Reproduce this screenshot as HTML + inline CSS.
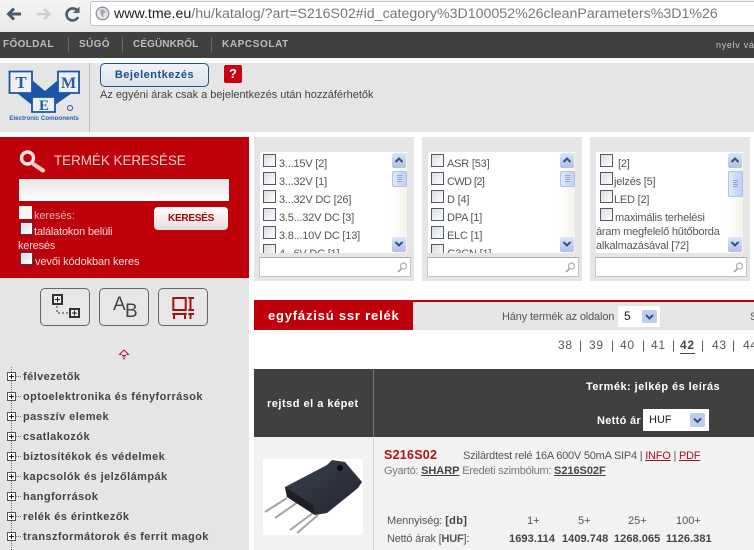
<!DOCTYPE html>
<html><head><meta charset="utf-8"><title>TME</title>
<style>
html,body{margin:0;padding:0;background:#fff}
body{width:754px;height:550px;position:relative;overflow:hidden;font-family:"Liberation Sans",sans-serif;font-size:11px;color:#444}
.a,.t{position:absolute}
.t{white-space:nowrap;line-height:14px}
.b{font-weight:bold}
.nav{color:#bcbcbc;font-weight:bold;font-size:10px;letter-spacing:.35px;top:38px}
.sep{position:absolute;top:37px;width:1px;height:15px;background:#6a6a6a}
.fbox{position:absolute;top:137px;width:160px;height:144px;background:#e5e5e5}
.list{position:absolute;left:6px;top:15px;width:147px;height:101px;background:#fff;overflow:hidden}
.sb{position:absolute;right:0;top:0;width:16px;height:101px;background:linear-gradient(90deg,#fff,#f3f3ea)}
.sbb{position:absolute;left:1px;width:14px;height:15px;background:linear-gradient(#dce6fa,#aebfe8);border-radius:2px}
.sbt{position:absolute;left:1px;top:19px;width:13px;height:14px;background:linear-gradient(90deg,#dfe8fb,#c0cff2);border:1px solid #b3c3e8;border-radius:2px}
.sbt:after{content:"";position:absolute;left:4px;top:50%;margin-top:-4px;width:5px;height:8px;background:repeating-linear-gradient(#8fa6d6 0 1px,transparent 1px 2px)}
.srch{position:absolute;left:5px;top:120px;width:150px;height:18px;background:#fff;border:1px solid #c4c4c4;border-top-color:#aaa}
.cb{position:absolute;width:11px;height:11px;border:1px solid #4e5a70;background:linear-gradient(135deg,#dcdcdc,#fff)}
.li{position:absolute;left:19px;margin-top:1px;color:#555;font-size:11px;letter-spacing:-.2px;white-space:nowrap;line-height:14px}
.tree{position:absolute;left:23px;margin-top:1px;font-weight:bold;color:#444;font-size:11px;letter-spacing:.42px;white-space:nowrap;line-height:14px}
.pl{position:absolute;left:7px;width:9px;height:9px;border:1px solid #555;background:#fff;box-sizing:border-box}
.pl:before{content:"";position:absolute;left:1px;top:3px;width:5px;height:1px;background:#222}
.pl:after{content:"";position:absolute;left:3px;top:1px;width:1px;height:5px;background:#222}
.dot{position:absolute;left:16px;width:5px;border-top:1px dotted #777}
.ib{position:absolute;top:288px;width:48px;height:36px;border:1px solid #666;border-radius:5px;background:#e7e7e7}
.pg{position:absolute;top:338px;font-size:12px;color:#555;letter-spacing:.7px}
</style></head>
<body>
<!-- browser toolbar -->
<div class="a" style="left:0;top:0;width:754px;height:32px;background:linear-gradient(#f4f4f4,#e9e9e9)"></div>
<svg class="a" style="left:0;top:0" width="90" height="30">
<path d="M21 14H9M14 8.500L8.500 14L14 19.500" fill="none" stroke="#4d5a6b" stroke-width="3"/>
<path d="M37 14H49M44 9L49.500 14L44 19" fill="none" stroke="#ccd0d6" stroke-width="2.600"/>
<path d="M77.500 11A6 6 0 1 0 78 17" fill="none" stroke="#4d5a6b" stroke-width="2.600"/><path d="M79.500 6.500V13H73Z" fill="#4d5a6b"/>
</svg>
<div class="a" style="left:90px;top:1px;width:664px;height:25px;background:#fff;border:1px solid #c2c2c2;border-right:0;border-radius:3px 0 0 3px;box-sizing:border-box"></div>
<svg class="a" style="left:95px;top:6px" width="15" height="15"><circle cx="7.500" cy="7.500" r="6.300" fill="#e4e8eb" stroke="#8d9196" stroke-width="1.300"/><path d="M5 4l3-1 3 3-3 2 1 4-3-3z" fill="#a4a8ad"/></svg>
<div class="t" style="left:114px;top:6px;font-size:14.200px;line-height:16px;color:#777"><span style="color:#222">www.tme.eu</span>/hu/katalog/?art=S216S02#id_category%3D100052%26cleanParameters%3D1%26</div>
<!-- nav -->
<div class="a" style="left:0;top:32px;width:754px;height:26px;background:#404040"></div>
<div class="t nav" style="left:3px">FŐOLDAL</div><div class="sep" style="left:68px"></div>
<div class="t nav" style="left:79px">SÚGÓ</div><div class="sep" style="left:122px"></div>
<div class="t nav" style="left:133px;letter-spacing:.1px">CÉGÜNKRŐL</div><div class="sep" style="left:211px"></div>
<div class="t nav" style="left:222px;letter-spacing:.6px">KAPCSOLAT</div>
<div class="t" style="left:716px;top:38px;color:#c4c4c4;font-size:9px;letter-spacing:.7px">nyelv vá</div>
<!-- top panel -->
<div class="a" style="left:0;top:63px;width:754px;height:69px;background:#e5e5e5"></div>
<div class="a" style="left:89px;top:63px;width:1px;height:69px;background:#bdbdbd"></div>
<svg class="a" style="left:8px;top:70px" width="74" height="50">
<path d="M1.500 1.500H24V23H1.500ZM50 1.500H71V23H50ZM24 27H47V42H24Z" fill="#eef0f4" stroke="#1a55a6" stroke-width="1.800"/>
<path d="M24 10L37 21L50 10V23H64L47 35V27H24V35L9 23H24Z" fill="#1a55a6"/>
<text x="13" y="18" font-family="Liberation Serif,serif" font-weight="bold" font-size="17" fill="#1f5aa8" text-anchor="middle">T</text>
<text x="60.500" y="18" font-family="Liberation Serif,serif" font-weight="bold" font-size="16" fill="#1f5aa8" text-anchor="middle">M</text>
<text x="36" y="40" font-family="Liberation Serif,serif" font-weight="bold" font-size="15" fill="#1f5aa8" text-anchor="middle">E</text>
<circle cx="62" cy="38" r="2.500" fill="none" stroke="#1a55a6" stroke-width="1"/>
<text x="36" y="50" font-weight="bold" font-size="6.200" fill="#2a63ad" text-anchor="middle" font-family="Liberation Sans,sans-serif">Electronic Components</text>
</svg>
<div class="a" style="left:100px;top:63px;width:109px;height:24px;box-sizing:border-box;border:1px solid #1d5390;border-radius:5px;background:linear-gradient(#f0f2f7,#dce3ee);color:#1d4f8c;font-weight:bold;font-size:11px;letter-spacing:.5px;text-align:center;line-height:22px">Bejelentkezés</div>
<div class="a" style="left:224px;top:65px;width:18px;height:18px;background:#c8000f;border-radius:2px;color:#fff;font-weight:bold;font-size:13px;text-align:center;line-height:18px">?</div>
<div class="t" style="left:100px;top:88px;color:#444;font-size:11px;letter-spacing:-.02px">Az egyéni árak csak a bejelentkezés után hozzáférhetők</div>
<!-- search box -->
<div class="a" style="left:0;top:137px;width:249px;height:141px;background:#bd0009"></div>
<svg class="a" style="left:18px;top:145px" width="30" height="30"><circle cx="9.500" cy="13" r="6" fill="#bd0009" stroke="#f7e3de" stroke-width="3.400"/><path d="M16 19.500L25 25.500" stroke="#eec9bf" stroke-width="4.200" stroke-linecap="round"/></svg>
<div class="t" style="left:54px;top:153px;color:#f2cfcf;font-size:13.400px;line-height:16px">TERMÉK KERESÉSE</div>
<div class="a" style="left:19px;top:179px;width:210px;height:22px;background:linear-gradient(#e6e6e6,#fff)"></div>
<div class="a" style="left:19px;top:206px;width:13px;height:13px;background:#f6f6f6"></div>
<div class="t" style="left:34px;top:209px;color:#e7b0b0;letter-spacing:-.1px">keresés:</div>
<div class="a" style="left:154px;top:207px;width:74px;height:23px;border-radius:4px;background:linear-gradient(#fff,#e4dcdc);color:#a80008;font-weight:bold;font-size:10px;text-align:center;line-height:23px;letter-spacing:-.25px">KERESÉS</div>
<div class="a" style="left:20px;top:222px;width:11px;height:11px;border:1px solid #3d3d60;background:linear-gradient(135deg,#d8d8e0,#fff)"></div>
<div class="t" style="left:34px;top:225px;color:#f0dcdc;letter-spacing:-.2px">találatokon belüli</div>
<div class="t" style="left:18px;top:239px;color:#f0dcdc;letter-spacing:-.2px">keresés</div>
<div class="a" style="left:20px;top:252px;width:11px;height:11px;border:1px solid #3d3d60;background:linear-gradient(135deg,#d8d8e0,#fff)"></div>
<div class="t" style="left:35px;top:255px;color:#f0dcdc;letter-spacing:-.1px">vevői kódokban keres</div>
<!-- sidebar -->
<div class="a" style="left:0;top:278px;width:249px;height:272px;background:#e5e5e5"></div>
<div class="ib" style="left:40px"><svg width="48" height="36"><path d="M12 6H21V15H12ZM29 20H38V28H29Z" fill="#eee" stroke="#333" stroke-width="2"/><path d="M14 10.500H19M16.500 8V13M31 24H36M33.500 21.500V26.500" stroke="#222"/><path d="M16 17V24H27" fill="none" stroke="#333" stroke-dasharray="2 2"/></svg></div>
<div class="ib" style="left:99px"><div class="t" style="left:13px;top:6px;font-size:19px;line-height:19px;color:#444">A</div><div class="t" style="left:25px;top:13px;font-size:19px;line-height:19px;color:#444">B</div></div>
<div class="ib" style="left:158px"><svg width="48" height="36"><path d="M14.300 9H26.700V21H14.300ZM29.300 9H35M31.500 9V21M29.300 21H35M13.300 25H27.700M15 25V30M26 25V30M29.300 25H35M31.500 25V30" fill="none" stroke="#a81015" stroke-width="2"/></svg></div>
<svg class="a" style="left:118px;top:349px" width="12" height="12"><path d="M6 1L1.500 5.500H3.500M6 1L10.500 5.500H8.500M4 6.500H8M4.500 8H7.500M5 9.700H7" fill="none" stroke="#b81530" stroke-width="1"/></svg>
<div class="a" style="left:11px;top:367px;height:183px;border-left:1px dotted #777"></div>
<div class="pl" style="top:372px"></div><div class="dot" style="top:376px"></div><div class="tree" style="top:369px">félvezetők</div>
<div class="pl" style="top:392px"></div><div class="dot" style="top:396px"></div><div class="tree" style="top:389px">optoelektronika és fényforrások</div>
<div class="pl" style="top:412px"></div><div class="dot" style="top:416px"></div><div class="tree" style="top:409px">passzív elemek</div>
<div class="pl" style="top:432px"></div><div class="dot" style="top:436px"></div><div class="tree" style="top:429px">csatlakozók</div>
<div class="pl" style="top:452px"></div><div class="dot" style="top:456px"></div><div class="tree" style="top:449px">biztosítékok és védelmek</div>
<div class="pl" style="top:472px"></div><div class="dot" style="top:476px"></div><div class="tree" style="top:469px">kapcsolók és jelzőlámpák</div>
<div class="pl" style="top:492px"></div><div class="dot" style="top:496px"></div><div class="tree" style="top:489px">hangforrások</div>
<div class="pl" style="top:512px"></div><div class="dot" style="top:516px"></div><div class="tree" style="top:509px">relék és érintkezők</div>
<div class="pl" style="top:532px"></div><div class="dot" style="top:536px"></div><div class="tree" style="top:529px">transzformátorok és ferrit magok</div>
<!-- filter 1 -->
<div class="fbox" style="left:254px"><div class="list">
<div class="cb" style="left:3px;top:2px"></div><div class="li" style="top:4px">3...15V [2]</div>
<div class="cb" style="left:3px;top:20px"></div><div class="li" style="top:22px">3...32V [1]</div>
<div class="cb" style="left:3px;top:38px"></div><div class="li" style="top:40px">3...32V DC [26]</div>
<div class="cb" style="left:3px;top:56px"></div><div class="li" style="top:58px">3.5...32V DC [3]</div>
<div class="cb" style="left:3px;top:74px"></div><div class="li" style="top:76px">3.8...10V DC [13]</div>
<div class="cb" style="left:3px;top:92px"></div><div class="li" style="top:94px">4...6V DC [1]</div>
<div class="sb"><div class="sbb" style="top:1px"></div><div class="sbt"></div><div class="sbb" style="top:85px"></div>
<svg class="a" style="left:0;top:0" width="16" height="101"><path d="M4.500 10L8 6.500L11.500 10M4.500 90L8 93.500L11.500 90" fill="none" stroke="#35517f" stroke-width="2"/></svg></div>
</div><div class="srch"><svg class="a" style="right:2px;top:3px" width="12" height="13"><circle cx="7.500" cy="5" r="3" fill="none" stroke="#aaa" stroke-width="1.200"/><path d="M5.500 7.500L2 11" stroke="#999" stroke-width="1.500"/></svg></div></div>
<!-- filter 2 -->
<div class="fbox" style="left:422px"><div class="list">
<div class="cb" style="left:3px;top:2px"></div><div class="li" style="top:4px">ASR [53]</div>
<div class="cb" style="left:3px;top:20px"></div><div class="li" style="top:22px;letter-spacing:-.6px">CWD [2]</div>
<div class="cb" style="left:3px;top:38px"></div><div class="li" style="top:40px">D [4]</div>
<div class="cb" style="left:3px;top:56px"></div><div class="li" style="top:58px">DPA [1]</div>
<div class="cb" style="left:3px;top:74px"></div><div class="li" style="top:76px">ELC [1]</div>
<div class="cb" style="left:3px;top:92px"></div><div class="li" style="top:94px">G3CN [1]</div>
<div class="sb"><div class="sbb" style="top:1px"></div><div class="sbt"></div><div class="sbb" style="top:85px"></div>
<svg class="a" style="left:0;top:0" width="16" height="101"><path d="M4.500 10L8 6.500L11.500 10M4.500 90L8 93.500L11.500 90" fill="none" stroke="#35517f" stroke-width="2"/></svg></div>
</div><div class="srch"><svg class="a" style="right:2px;top:3px" width="12" height="13"><circle cx="7.500" cy="5" r="3" fill="none" stroke="#aaa" stroke-width="1.200"/><path d="M5.500 7.500L2 11" stroke="#999" stroke-width="1.500"/></svg></div></div>
<!-- filter 3 -->
<div class="fbox" style="left:590px"><div class="list">
<div class="cb" style="left:4px;top:2px"></div><div class="li" style="top:4px;left:22px">[2]</div>
<div class="cb" style="left:4px;top:20px"></div><div class="li" style="top:22px;left:18px">jelzés [5]</div>
<div class="cb" style="left:4px;top:38px"></div><div class="li" style="top:40px;left:18px">LED [2]</div>
<div class="cb" style="left:4px;top:56px"></div><div class="li" style="top:58px;left:19px">maximális terhelési</div>
<div class="li" style="top:72px;left:0">áram megfelelő hűtőborda</div>
<div class="li" style="top:86px;left:0">alkalmazásával [72]</div>
<div class="sb"><div class="sbb" style="top:1px"></div><div class="sbt" style="height:24px"></div><div class="sbb" style="top:85px"></div>
<svg class="a" style="left:0;top:0" width="16" height="101"><path d="M4.500 10L8 6.500L11.500 10M4.500 90L8 93.500L11.500 90" fill="none" stroke="#35517f" stroke-width="2"/></svg></div>
</div><div class="srch"><svg class="a" style="right:2px;top:3px" width="12" height="13"><circle cx="7.500" cy="5" r="3" fill="none" stroke="#aaa" stroke-width="1.200"/><path d="M5.500 7.500L2 11" stroke="#999" stroke-width="1.500"/></svg></div></div>
<!-- title bar -->
<div class="a" style="left:254px;top:300px;width:500px;height:2px;background:#bd0009"></div>
<div class="a" style="left:254px;top:302px;width:500px;height:28px;background:#e5e5e5"></div>
<div class="a" style="left:254px;top:300px;width:159px;height:30px;background:#bd0009"></div>
<div class="t b" style="left:268px;top:309px;color:#fff;font-size:13px;letter-spacing:.8px">egyfázisú ssr relék</div>
<div class="t" style="left:502px;top:310px;color:#555;font-size:11px;letter-spacing:-.15px">Hány termék az oldalon</div>
<div class="a" style="left:618px;top:306px;width:42px;height:21px;background:#fff;color:#222;font-size:12px;line-height:21px;text-indent:6px">5<svg class="a" style="left:24px;top:4px" width="15" height="13"><rect width="15" height="13" rx="2" fill="#bccdf0"/><path d="M4 5L7.500 8.500L11 5" fill="none" stroke="#35517f" stroke-width="2"/></svg></div>
<div class="t" style="left:750px;top:310px;color:#555">S</div>
<!-- pagination -->
<div class="pg" style="left:558px">38</div><div class="pg" style="left:579px">|</div>
<div class="pg" style="left:589px">39</div><div class="pg" style="left:611px">|</div>
<div class="pg" style="left:620px">40</div><div class="pg" style="left:642px">|</div>
<div class="pg" style="left:651px">41</div><div class="pg" style="left:672px">|</div>
<div class="pg b" style="left:680px;border-bottom:1px solid #444;padding-bottom:1px;color:#444">42</div><div class="pg" style="left:701px">|</div>
<div class="pg" style="left:712px">43</div><div class="pg" style="left:732px">|</div>
<div class="pg" style="left:743px">44</div>
<!-- table head -->
<div class="a" style="left:254px;top:369px;width:500px;height:68px;background:#404040"></div>
<div class="a" style="left:373px;top:369px;width:1px;height:68px;background:#777"></div>
<div class="t b" style="left:267px;top:397px;color:#fff;font-size:11px;letter-spacing:.5px">rejtsd el a képet</div>
<div class="t b" style="left:586px;top:380px;color:#fff;font-size:11px;letter-spacing:.45px">Termék: jelkép és leírás</div>
<div class="t b" style="left:597px;top:414px;color:#fff;font-size:11px;letter-spacing:.3px">Nettó ár</div>
<div class="a" style="left:643px;top:409px;width:66px;height:22px;background:#fff;color:#222;font-size:11px;line-height:22px;text-indent:6px">HUF<svg class="a" style="left:47px;top:4px" width="15" height="14"><rect width="15" height="14" rx="2" fill="#bccdf0"/><path d="M4 5.500L7.500 9L11 5.500" fill="none" stroke="#35517f" stroke-width="2"/></svg></div>
<!-- row -->
<div class="a" style="left:254px;top:437px;width:500px;height:113px;background:#f2f2f2"></div>
<div class="a" style="left:373px;top:437px;width:1px;height:113px;background:#d4d4d4"></div>
<svg class="a" style="left:263px;top:459px" width="100" height="76">
<defs><linearGradient id="g" x1="0" y1="0" x2="1" y2="1"><stop offset="0" stop-color="#39404f"/><stop offset="1" stop-color="#23262e"/></linearGradient></defs>
<rect width="100" height="76" fill="#fff"/>
<path d="M2 53L24 39M12 59L35 43M27 71L50 54M34 74L55 56" stroke="#a4a4a4" stroke-width="2"/>
<path d="M22 28L64 6L69 1L82 3L99 23L95 29L64 54L52 56L24 38Z" fill="url(#g)"/>
<path d="M22 28L24 38L52 56L50 46Z" fill="#1e2026"/>
<circle cx="77" cy="9" r="3" fill="#0c0d10"/>
</svg>
<div class="t b" style="left:384px;top:448px;color:#b20f1b;font-size:12.500px;letter-spacing:.25px">S216S02</div>
<div class="t" style="left:463px;top:449px;color:#555;font-size:11px;letter-spacing:-.22px">Szilárdtest relé 16A 600V 50mA SIP4 | <span style="color:#a4101c;text-decoration:underline">INFO</span> | <span style="color:#a4101c;text-decoration:underline">PDF</span></div>
<div class="t" style="left:384px;top:464px;color:#777;font-size:11px;letter-spacing:-.25px">Gyartó: <span class="b" style="color:#444;text-decoration:underline;letter-spacing:-.05px">SHARP</span> Eredeti szimbólum: <span class="b" style="color:#444;text-decoration:underline;letter-spacing:-.05px">S216S02F</span></div>
<div class="t" style="left:387px;top:514px;color:#555;letter-spacing:-.1px">Mennyiség: <span class="b" style="color:#444;letter-spacing:.3px">[db]</span></div>
<div class="t" style="left:527px;top:514px;color:#555">1+</div>
<div class="t" style="left:578px;top:514px;color:#555">5+</div>
<div class="t" style="left:628px;top:514px;color:#555">25+</div>
<div class="t" style="left:676px;top:514px;color:#555">100+</div>
<div class="t" style="left:387px;top:532px;color:#555;letter-spacing:-.2px">Nettó árak [<span class="b">HUF</span>]:</div>
<div class="t b" style="left:509px;top:532px;color:#444;letter-spacing:.1px">1693.114</div>
<div class="t b" style="left:562px;top:532px;color:#444;letter-spacing:.05px">1409.748</div>
<div class="t b" style="left:614px;top:532px;color:#444;letter-spacing:.05px">1268.065</div>
<div class="t b" style="left:666px;top:532px;color:#444;letter-spacing:.05px">1126.381</div>
</body></html>
